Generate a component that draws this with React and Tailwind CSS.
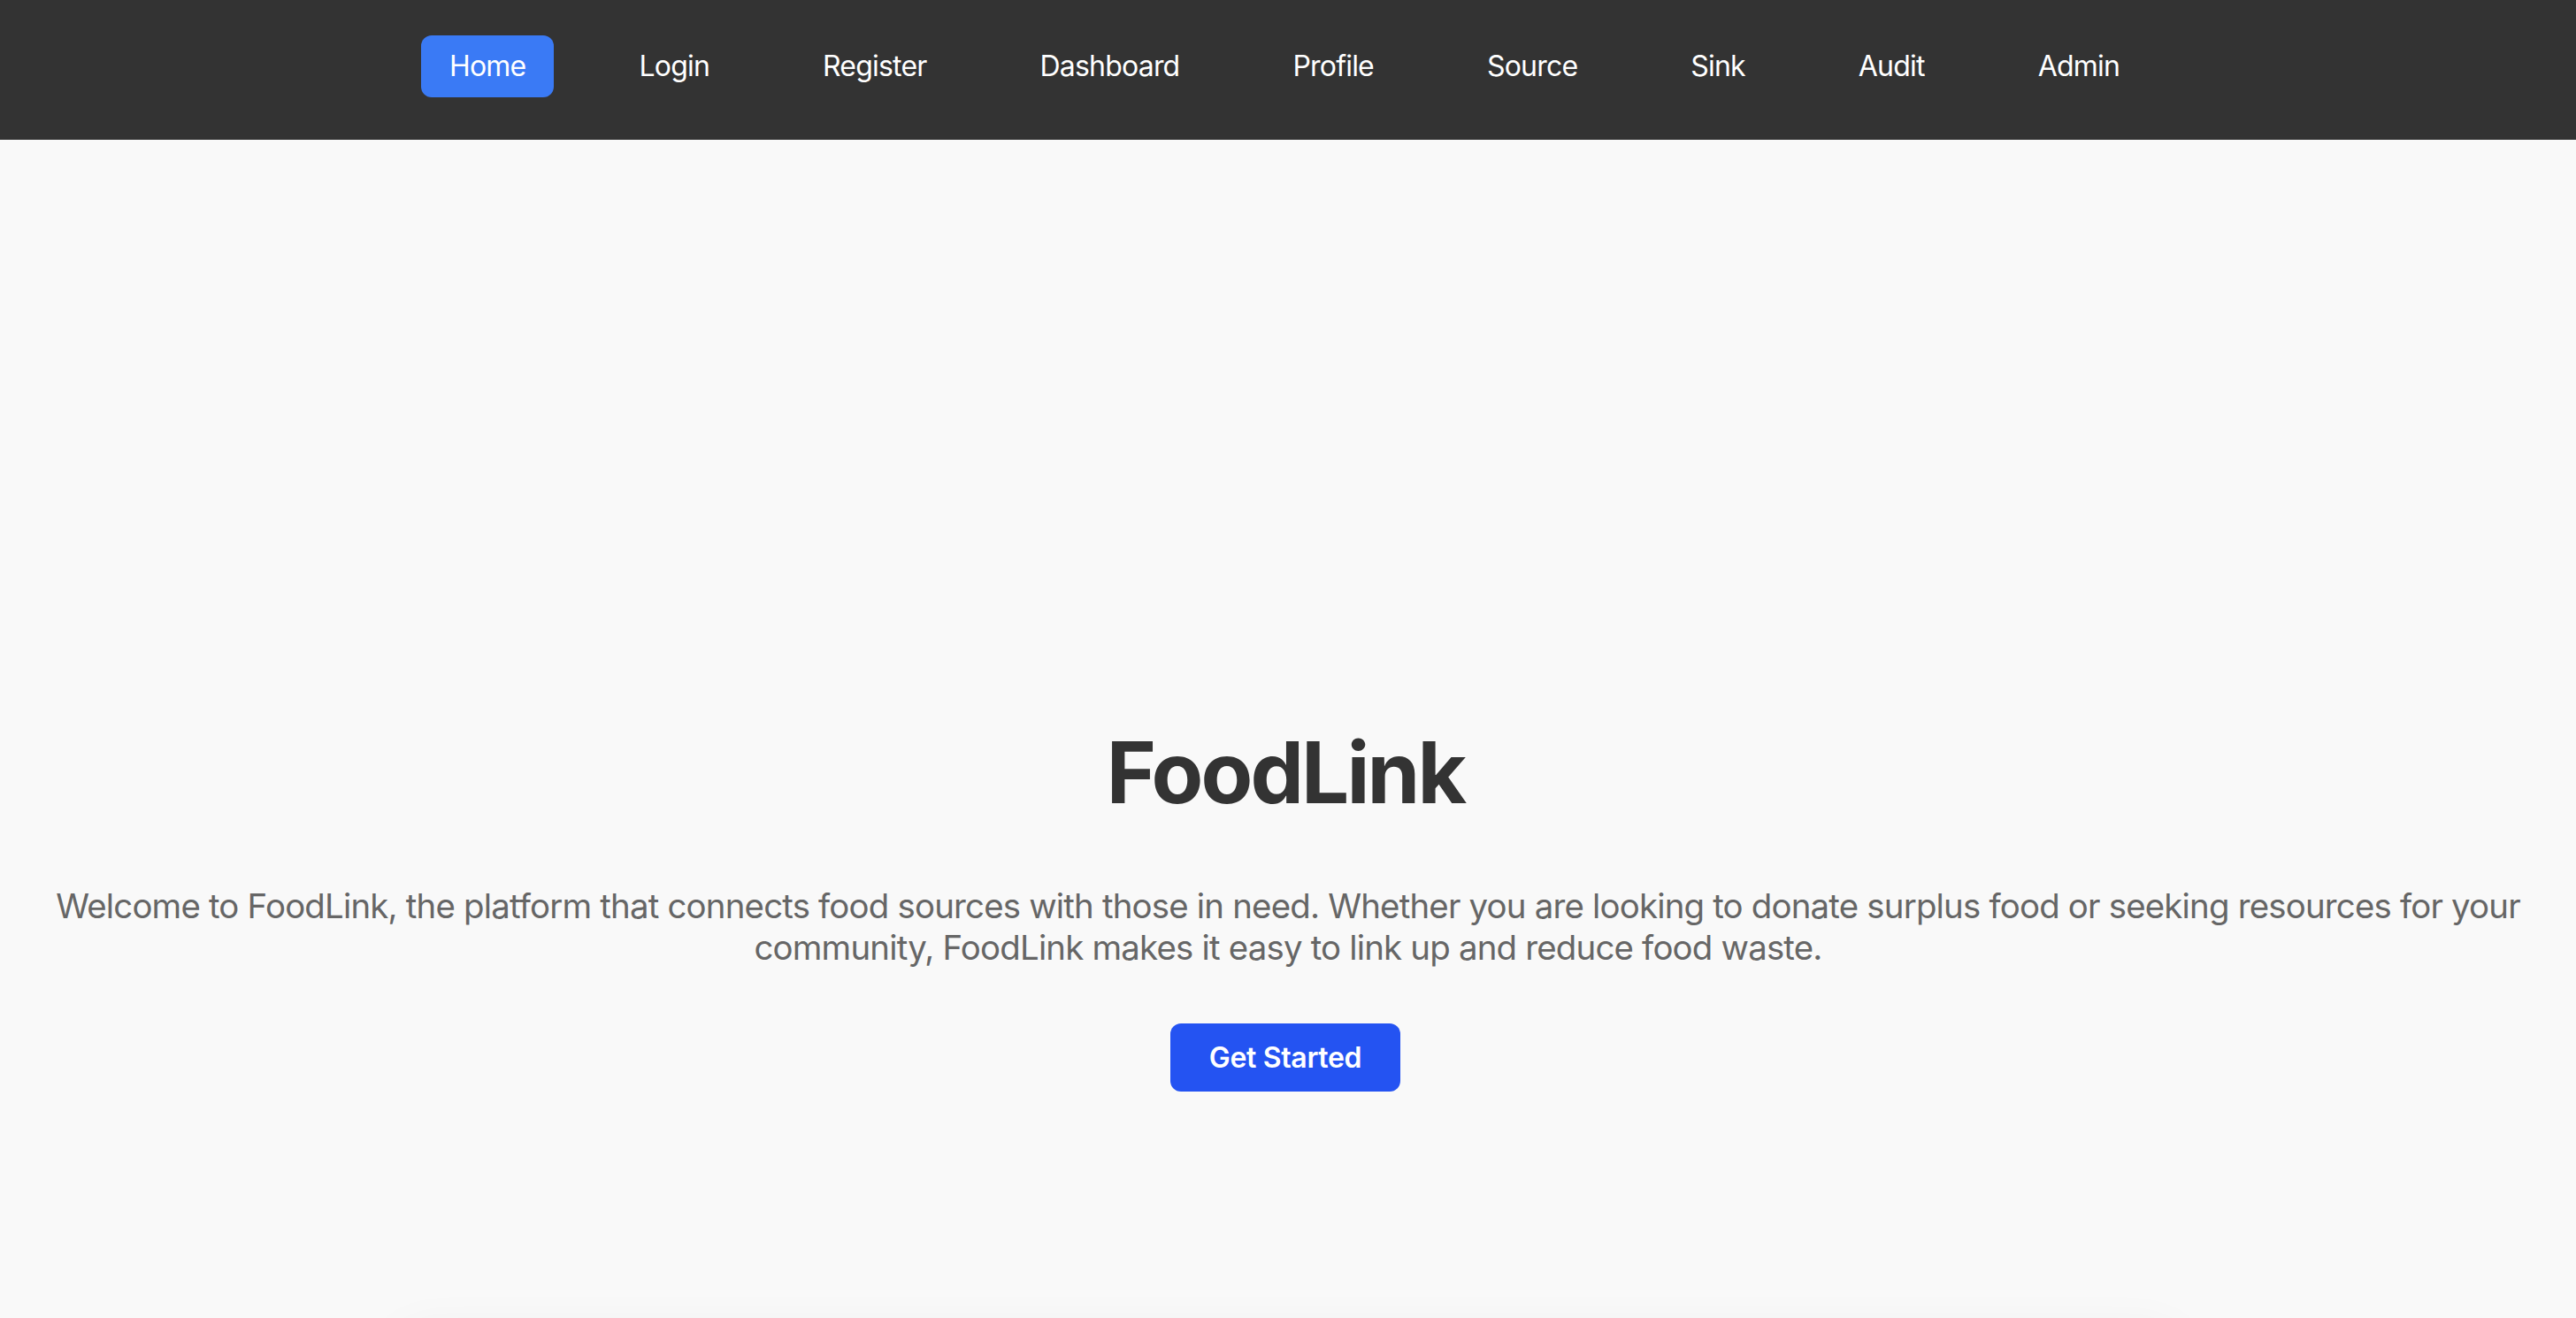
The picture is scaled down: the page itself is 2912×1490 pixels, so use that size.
import React from "react";

const links = ["Home", "Login", "Register", "Dashboard", "Profile", "Source", "Sink", "Audit", "Admin"];

/**
 * FoodLink landing page
 * Top nav plus a centred hero with a call to action
 */
export default function App() {
    return (
        <div
            className="min-h-screen bg-[#f9f9f9] overflow-hidden"
            style={{ fontFamily: "Inter, 'Liberation Sans', sans-serif" }}
        >
            {/* Navigation */}
            <nav className="h-[158px] bg-[#333333] flex items-start justify-center gap-16 pt-10 pr-[8px]">
                {links.map((label) => (
                    <a
                        key={label}
                        href="#"
                        className={
                            label === "Home"
                                ? "h-[70px] px-8 flex items-center rounded-[12px] bg-[#3a7af5] text-white text-[32px] tracking-[-0.025em]"
                                : "h-[70px] px-8 flex items-center rounded-[12px] text-white text-[32px] tracking-[-0.025em]"
                        }
                    >
                        {label}
                    </a>
                ))}
            </nav>

            {/* Hero */}
            <section className="flex flex-col items-center text-center px-8 pt-[658px]">
                <h1 className="text-[96px] leading-[1.2] font-bold tracking-[-0.03em] text-[#333333] pr-[6px]">FoodLink</h1>
                <p className="mt-[70px] text-[38.4px] leading-[47px] tracking-[-0.021em] text-[#666666]">
                    Welcome to FoodLink, the platform that connects food sources with those in need. Whether you
                    are looking to donate surplus food or seeking resources for your community, FoodLink makes it
                    easy to link up and reduce food waste.
                </p>
                <button className="mt-[62px] h-[77px] px-[44px] rounded-[12px] bg-[#2453f2] text-white text-[32px] font-semibold tracking-[-0.01em] mr-[6px]">
                    Get Started
                </button>
            </section>

            {/* Features card, starts below the fold */}
            <section className="mx-auto mt-[280px] w-[2000px] h-[400px] rounded-[16px] bg-white shadow-[0_0_60px_rgba(0,0,0,0.08)]" />
        </div>
    );
}
